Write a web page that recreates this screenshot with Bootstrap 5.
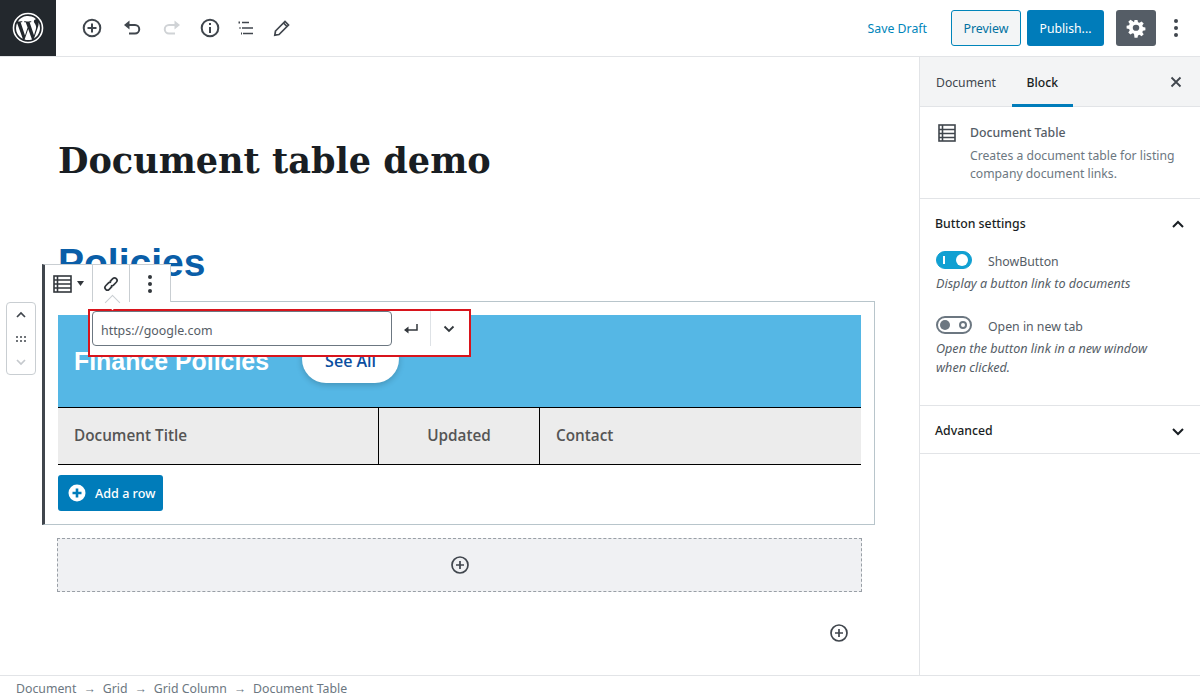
<!doctype html>
<html lang="en"><head><meta charset="utf-8"><title>Document table demo</title>
<link href="https://cdn.jsdelivr.net/npm/bootstrap@5.3.0/dist/css/bootstrap.min.css" rel="stylesheet">
<style>
html,body{height:100%;overflow:hidden}
body{font-family:"Noto Sans","Open Sans",sans-serif;font-size:12.3px;color:#32373c;background:#fff}
.wp-shell{width:1200px;height:700px}
.wp-top{height:57px;border-bottom:1px solid #e2e4e7}
.wp-logo{width:56px;height:56px;background:#23282d}
.wp-tools{padding-left:16px}
.tool-slot{width:40px;height:40px}
.tool-slim{width:36px}
.tool-slot svg{display:block}
.save-link{color:#0085ba;font-size:12.3px;margin-right:24px;padding-top:3px}
.btn-prev{width:70px;height:36px;border:1px solid #0085ba;border-radius:3px;background:#f3f5f6;color:#0071a1;font-size:12.4px;padding:3px 0 0;margin-right:6px}
.btn-pub{width:77px;height:36px;background:#007cba;border:0;border-radius:3px;color:#fff;font-size:12.2px;padding:3px 0 0;margin-right:12px}
.btn-gear{width:40px;height:36px;background:#555d66;border:0;border-radius:3px;padding:0}
.dots-slot{width:24px;margin-left:8px;margin-right:12px}
.wp-body{height:618px}
.wp-edit{width:919px;position:relative}
.wp-side{width:281px;border-left:1px solid #e2e4e7}
.side-tabs{height:50px;background:#f3f4f5;border-bottom:1px solid #e2e4e7;padding-left:16px}
.side-tab{height:49px;line-height:52px;color:#40464d;font-size:12.2px;margin-right:16px}
.side-tab-on{color:#191e23;font-weight:500;width:61px;text-align:center;border-bottom:3px solid #007cba;height:50px;margin-right:0}
.side-card{padding:17px 15px 14px 18px;border-bottom:1px solid #e2e4e7;height:92px;gap:14px}
.side-name{font-weight:500;color:#555d66;line-height:18px}
.side-desc{color:#6c7781;line-height:18px;margin-top:5px;font-size:12.2px}
.side-panel{padding:0 15px;border-bottom:1px solid #e2e4e7}
.panel-h{height:48px;color:#191e23;font-weight:500;padding-top:2px}
.side-last{padding-top:4px}
.set-wrap{margin-left:1px}
.set-row{height:18px;gap:16px;color:#555d66;padding-top:0}
.set-label{position:relative;top:2px}
.set-help{font-style:italic;color:#555d66;font-size:12.6px;line-height:19px;max-width:230px;padding-top:1px}
.tog{width:36px;height:18px;border-radius:9px;position:relative;display:block}
.tog-on{background:#11a0d2;border:1px solid #11a0d2}
.tog-on::before{content:"";position:absolute;left:6px;top:4px;width:2px;height:8px;background:#fff}
.tog-on::after{content:"";position:absolute;right:3px;top:2px;width:12px;height:12px;border-radius:50%;background:#fff}
.tog-off{background:#fff;border:2px solid #6c7781}
.tog-off::before{content:"";position:absolute;left:2px;top:2px;width:10px;height:10px;border-radius:50%;background:#6c7781}
.tog-off::after{content:"";position:absolute;right:3px;top:3px;width:8px;height:8px;border-radius:50%;border:2px solid #6c7781}
.doc-title{font-family:"DejaVu Serif","Liberation Serif",serif;font-weight:700;font-size:35.1px;line-height:46px;color:#191e23;margin:0;position:absolute;left:58px;top:81px;white-space:nowrap}
.edit-flow{padding:183px 0 0 58px}
.pol-h{font-family:"Liberation Sans",sans-serif;font-weight:700;font-size:39px;line-height:46px;color:#0a5ea8;margin:0}
.block-wrap{margin:15px 0 0 -16px;width:833px;height:224px;border:1px solid #b8c5cb;border-left:3px solid #40464d;padding:13px 13px 0 13px;position:relative}
.blue-band{height:93px;background:#55b7e5;padding-top:32px;padding-left:16px;border-bottom:1px solid #000;gap:33px}
.fin-h{font-family:"Liberation Sans",sans-serif;font-weight:700;font-size:24.9px;color:#fff;line-height:28px;margin:0;white-space:nowrap}
.see-all{width:97px;height:48px;background:#fff;border-radius:24px;color:#0a4ea0;font-family:"Open Sans",sans-serif;font-weight:600;font-size:16px;line-height:52px;text-align:center;box-shadow:0 2px 6px rgba(0,0,0,.2);margin-top:-12px;align-self:flex-start}
.doc-grid{display:grid;grid-template-columns:320px 162px 1fr;height:57px;background:#ececec;border-bottom:1px solid #000;font-family:"Open Sans",sans-serif;font-weight:600;font-size:15.3px;color:#555}
.doc-cell{display:flex;align-items:center;padding-left:16px;padding-bottom:2px}
.doc-cell-mid{border-left:1px solid #000;border-right:1px solid #000;justify-content:center;padding-left:0}
.add-row{height:36px;width:105px;margin-top:10px;background:#007cba;border:0;border-radius:3px;color:#fff;font-size:12.6px;padding:0 0 0 10px;gap:9px;font-weight:500}
.add-txt{position:relative;top:1px}
.dash-block{margin:13px 0 0 -1px;width:805px;height:54px;background:#f0f1f3;border:1px dashed #999fa6}
.float-plus{position:absolute;left:829px;top:566px}
.blk-bar{position:absolute;left:-3px;top:-38px;height:38px;background:#fff;border:1px solid #c9ced2;border-bottom:0;border-left:3px solid #40464d}
.bar-cell{height:37px;border-right:1px solid #c9ced2}
.bar-cell:last-child{border-right:0}
.mover{position:absolute;left:-39px;top:0;width:30px;height:73px;border:1px solid #c9ced2;border-radius:4px;background:#fff}
.link-pop{position:absolute;left:43px;top:7px;width:383px;height:48px;background:#fff;border:2px solid #d8141c;padding:0 0 0 2px}
.link-input{width:300px;height:35px;border:1px solid #6c7781;border-radius:4px;padding:2px 8px 0;color:#555d66;font-size:12.4px;line-height:33px}
.pop-arrow{position:absolute;left:62px;top:-5px;width:11px;height:11px;background:#fff;border:1px solid #c9ced2;border-right:0;border-bottom:0;transform:rotate(45deg);z-index:1}
.pop-slot{height:35px}
.wp-foot{height:25px;border-top:1px solid #e2e4e7;padding-left:16px;color:#6c7781;font-size:12.3px;line-height:25px;gap:7px}
</style></head>
<body>
<div class="wp-shell d-flex flex-column">
  <header class="wp-top d-flex align-items-center">
    <div class="wp-logo d-flex align-items-center justify-content-center flex-shrink-0">
      <svg width="32" height="32" viewBox="0 0 32 32"><circle cx="16" cy="16" r="14.5" fill="none" stroke="#fff" stroke-width="1.6"/><path fill="#fff" d="M4 16c0 4.800 2.800 8.900 6.800 10.800L5.100 11.100A12 12 0 0 0 4 16zm20.100-.6c0-1.500-.5-2.500-1-3.300-.6-1-1.200-1.800-1.200-2.800 0-1.100.8-2.100 2-2.100h.2A12 12 0 0 0 5.900 9.400h.8c1.300 0 3.200-.2 3.200-.2.600 0 .7.900.1 1 0 0-.7.100-1.400.1l4.400 13.100 2.600-7.900-1.900-5.200c-.6 0-1.300-.1-1.300-.1-.6 0-.5-1 .1-1 0 0 2 .2 3.200.2 1.300 0 3.200-.2 3.200-.2.600 0 .7.900.1 1 0 0-.7.100-1.400.1l4.400 13 1.200-4c.5-1.600.9-2.800.9-3.900zm-7.900 1.700-3.600 10.500a12 12 0 0 0 7.400-.2l-.1-.2zm10.300-6.800.1 1.200c0 1.200-.2 2.600-.9 4.300l-3.700 10.600A12 12 0 0 0 26.500 10.300z"/></svg>
    </div>
    <div class="wp-tools d-flex align-items-center">
      <div class="tool-slot d-flex align-items-center justify-content-center"><svg width="20" height="20" viewBox="0 0 20 20" fill="none" stroke="#40464d" stroke-width="2"><circle cx="10" cy="10" r="8.300"/><path d="M10 5.500v9M5.500 10h9"/></svg></div>
      <div class="tool-slot d-flex align-items-center justify-content-center"><svg width="20" height="20" viewBox="0 0 20 20" fill="none" stroke="#40464d" stroke-width="2"><path d="M4 7h9a4 4 0 0 1 0 8.500H7"/><path fill="#40464d" stroke="none" d="M7.500 2.500v9L2 7z"/></svg></div>
      <div class="tool-slot d-flex align-items-center justify-content-center"><svg width="20" height="20" viewBox="0 0 20 20" fill="none" stroke="#d0d3d6" stroke-width="2"><path d="M16 7H7a4 4 0 0 0 0 8.500h6"/><path fill="#d0d3d6" stroke="none" d="M12.500 2.500v9L18 7z"/></svg></div>
      <div class="tool-slot tool-slim d-flex align-items-center justify-content-center"><svg width="20" height="20" viewBox="0 0 20 20" fill="none" stroke="#40464d" stroke-width="2"><circle cx="10" cy="10" r="8.300"/><path d="M10 9v6"/><path d="M10 5v2"/></svg></div>
      <div class="tool-slot tool-slim d-flex align-items-center justify-content-center"><svg width="20" height="20" viewBox="0 0 20 20" fill="none" stroke="#40464d" stroke-width="1.700"><path d="M6 4.500h7M6 10h11M7 15.500h10"/><path stroke-width="2" d="M2.500 4.500h1.500M3.500 10h1M5 15.500h1"/></svg></div>
      <div class="tool-slot tool-slim d-flex align-items-center justify-content-center"><svg width="20" height="20" viewBox="0 0 20 20" fill="none" stroke="#40464d" stroke-width="1.700"><path d="M3.500 13 13 3.500l3.500 3.500L7 16.500l-4.200.7z"/><path d="m11.500 5 3.500 3.500"/></svg></div>
    </div>
    <div class="ms-auto d-flex align-items-center">
      <span class="save-link">Save Draft</span>
      <button type="button" class="btn btn-prev">Preview</button>
      <button type="button" class="btn btn-pub">Publish...</button>
      <button type="button" class="btn btn-gear d-flex align-items-center justify-content-center"><svg width="20" height="20" viewBox="0 0 20 20"><path fill="#fff" fill-rule="evenodd" d="M8.500 1.500h3l.5 2.500 1.500.6 2.100-1.400 2.100 2.100-1.400 2.100.6 1.500 2.500.5v3l-2.500.5-.6 1.500 1.400 2.100-2.100 2.100-2.100-1.400-1.500.6-.5 2.500h-3L8 16l-1.500-.6-2.100 1.400-2.100-2.100 1.400-2.100L3.100 11l-2.500-.5v-3L3.100 7l.6-1.500L2.300 3.400l2.100-2.100 2.100 1.400L8 4zM10 6.500a3 3 0 1 0 0 6.500 3 3 0 0 0 0-6.500z" transform="translate(0 .5) scale(1 .95)"/></svg></button>
      <div class="dots-slot d-flex justify-content-center"><svg width="6" height="20" viewBox="0 0 6 20" fill="#40464d"><circle cx="3" cy="3" r="2"/><circle cx="3" cy="10" r="2"/><circle cx="3" cy="17" r="2"/></svg></div>
    </div>
  </header>

  <div class="wp-body d-flex">
    <main class="wp-edit">
      <h1 class="doc-title">Document table demo</h1>
      <div class="edit-flow">
        <h2 class="pol-h">Policies</h2>
        <div class="block-wrap">
          <div class="blk-bar d-flex">
            <div class="bar-cell d-flex align-items-center justify-content-center gap-1" style="width:48px"><svg width="20" height="18" viewBox="0 0 20 18" fill="none" stroke="#32373c" stroke-width="1.600"><rect x="1" y="1" width="17" height="16"/><path d="M1 5h17M1 9h17M1 13h17M4.500 1v16"/></svg><svg width="7" height="5" viewBox="0 0 7 5" fill="#32373c"><path d="M0 0h7L3.500 5z"/></svg></div>
            <div class="bar-cell d-flex align-items-center justify-content-center" style="width:37px"><svg width="18" height="18" viewBox="0 0 18 18" fill="none" stroke="#32373c" stroke-width="1.700"><g transform="rotate(45 9 9)"><path d="M6.500 8V4a2.500 2.500 0 0 1 5 0v4a2.500 2.500 0 0 1-1.500 2.300"/><path d="M11.500 10v4a2.500 2.500 0 0 1-5 0v-4a2.500 2.500 0 0 1 1.500-2.300"/></g></svg></div>
            <div class="bar-cell d-flex align-items-center justify-content-center" style="width:40px"><svg width="6" height="20" viewBox="0 0 6 20" fill="#32373c"><circle cx="3" cy="3" r="2"/><circle cx="3" cy="10" r="2"/><circle cx="3" cy="17" r="2"/></svg></div>
          </div>
          <div class="mover d-flex flex-column align-items-center justify-content-between py-2">
            <svg width="12" height="8" viewBox="0 0 12 8" fill="none" stroke="#40464d" stroke-width="1.700"><path d="m2 6 4-4 4 4"/></svg>
            <svg width="10" height="6" viewBox="0 0 10 6" fill="#40464d"><circle cx="1" cy="1" r="1"/><circle cx="5" cy="1" r="1"/><circle cx="9" cy="1" r="1"/><circle cx="1" cy="5" r="1"/><circle cx="5" cy="5" r="1"/><circle cx="9" cy="5" r="1"/></svg>
            <svg width="12" height="8" viewBox="0 0 12 8" fill="none" stroke="#c5c9cd" stroke-width="1.700"><path d="m2 2 4 4 4-4"/></svg>
          </div>
          <div class="blue-band d-flex">
            <p class="fin-h">Finance Policies</p>
            <span class="see-all">See All</span>
          </div>
          <div class="doc-grid">
            <div class="doc-cell">Document Title</div>
            <div class="doc-cell doc-cell-mid">Updated</div>
            <div class="doc-cell">Contact</div>
          </div>
          <button type="button" class="btn add-row d-flex align-items-center"><svg width="18" height="18" viewBox="0 0 18 18"><circle cx="9" cy="9" r="8.500" fill="#fff"/><path d="M9 4.500v9M4.500 9h9" stroke="#007cba" stroke-width="2.600"/></svg><span class="add-txt">Add a row</span></button>
          <span class="pop-arrow"></span>
          <div class="link-pop d-flex align-items-start">
            <div class="link-input">https://google.com</div>
            <div class="pop-slot d-flex align-items-center justify-content-center" style="width:38px"><svg width="16" height="12" viewBox="0 0 16 12" fill="none" stroke="#32373c" stroke-width="1.500"><path d="M14 1v6H2"/><path fill="#32373c" stroke="none" d="M5.500 3.500v7L1 7z"/></svg></div>
            <div class="pop-slot d-flex align-items-center justify-content-center border-start" style="width:37px"><svg width="12" height="8" viewBox="0 0 12 8" fill="none" stroke="#32373c" stroke-width="1.800"><path d="m1.500 1.500 4.500 4.500 4.500-4.500"/></svg></div>
          </div>
        </div>
        <div class="dash-block d-flex align-items-center justify-content-center"><svg width="20" height="20" viewBox="0 0 20 20" fill="none" stroke="#40464d" stroke-width="1.700"><circle cx="10" cy="10" r="8"/><path d="M10 6v8M6 10h8"/></svg></div>
      </div>
      <svg class="float-plus" width="20" height="20" viewBox="0 0 20 20" fill="none" stroke="#40464d" stroke-width="1.700"><circle cx="10" cy="10" r="8"/><path d="M10 6v8M6 10h8"/></svg>
    </main>

    <aside class="wp-side">
      <div class="side-tabs d-flex align-items-center">
        <span class="side-tab">Document</span>
        <span class="side-tab side-tab-on">Block</span>
        <svg class="ms-auto" style="margin-right:18px" width="12" height="12" viewBox="0 0 12 12" stroke="#40464d" stroke-width="1.800"><path d="m1.500 1.500 9 9M10.500 1.500l-9 9"/></svg>
      </div>
      <div class="side-card d-flex">
        <svg class="flex-shrink-0" width="18" height="18" viewBox="0 0 18 18" fill="none" stroke="#40464d" stroke-width="1.600"><rect x="1" y="1" width="16" height="16"/><path d="M1 5.500h16M1 9.500h16M1 13.500h16M4.500 1v16"/></svg>
        <div>
          <div class="side-name">Document Table</div>
          <div class="side-desc">Creates a document table for listing company document links.</div>
        </div>
      </div>
      <div class="side-panel" style="height:207px">
        <div class="panel-h d-flex align-items-center justify-content-between"><span>Button settings</span><svg style="margin-right:1px" width="12" height="8" viewBox="0 0 12 8" fill="none" stroke="#191e23" stroke-width="2"><path d="m1 7 5-5 5 5"/></svg></div>
        <div class="set-wrap">
          <div class="set-row d-flex align-items-center mt-1"><span class="tog tog-on"></span><span class="set-label">ShowButton</span></div>
          <div class="set-help mt-1">Display a button link to documents</div>
          <div class="set-row d-flex align-items-center" style="margin-top:23px"><span class="tog tog-off"></span><span class="set-label">Open in new tab</span></div>
          <div class="set-help mt-1">Open the button link in a new window when clicked.</div>
        </div>
      </div>
      <div class="side-panel panel-h side-last d-flex align-items-center justify-content-between"><span>Advanced</span><svg style="margin-right:1px" width="12" height="8" viewBox="0 0 12 8" fill="none" stroke="#191e23" stroke-width="2"><path d="m1 1 5 5 5-5"/></svg></div>
    </aside>
  </div>

  <footer class="wp-foot d-flex">
    <span>Document</span><span>→</span><span>Grid</span><span>→</span><span>Grid Column</span><span>→</span><span>Document Table</span>
  </footer>
</div>
<script src="https://cdn.jsdelivr.net/npm/bootstrap@5.3.0/dist/js/bootstrap.bundle.min.js"></script>
</body></html>
